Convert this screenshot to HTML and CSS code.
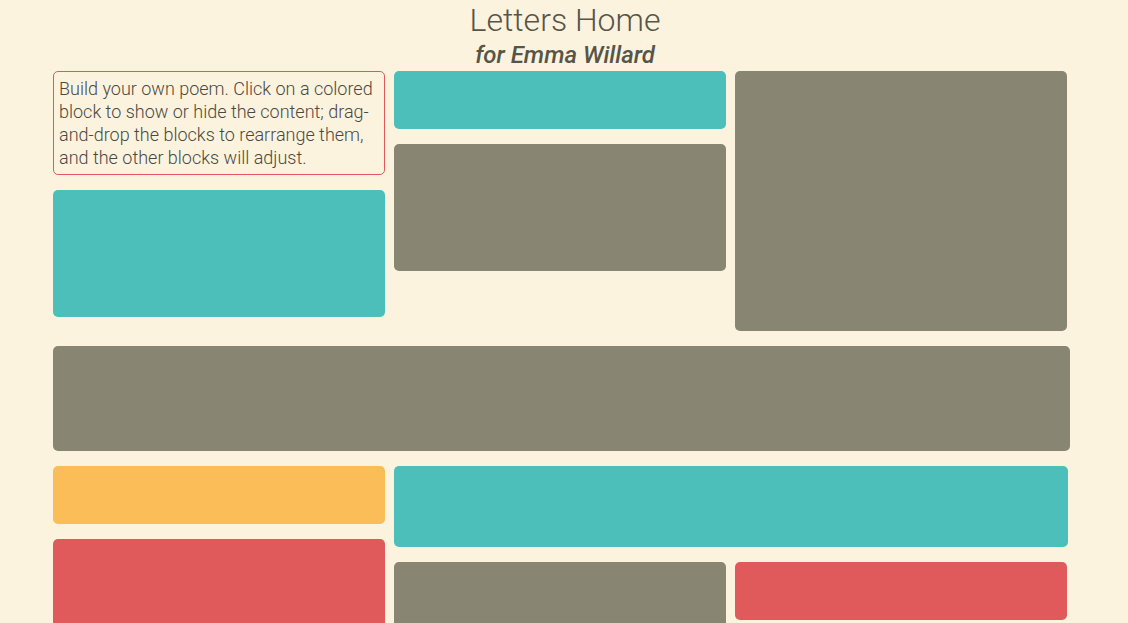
FILE: index.html
```html
<!DOCTYPE html>
<html lang="en">
<head>
<meta charset="utf-8">
<meta name="viewport" content="width=device-width, initial-scale=1">
<title>Letters Home</title>
<link rel="stylesheet" href="styles.css">
</head>
<body>
<header class="masthead">
  <h1 class="title">Letters Home</h1>
  <h2 class="subtitle">for Emma Willard</h2>
</header>
<main class="poem">
  <section class="row">
    <div class="stack">
      <p class="intro">Build your own poem. Click on a colored block to show or hide the content; drag-and-drop the blocks to rearrange them, and the other blocks will adjust.</p>
      <button type="button" class="block teal large" aria-label="Show stanza 1"></button>
    </div>
    <div class="stack">
      <button type="button" class="block teal small" aria-label="Show stanza 2"></button>
      <button type="button" class="block stone large" aria-label="Show stanza 3"></button>
    </div>
    <div class="stack">
      <button type="button" class="block stone tall" aria-label="Show stanza 4"></button>
    </div>
  </section>
  <button type="button" class="block stone wide" aria-label="Show stanza 5"></button>
  <section class="row">
    <div class="stack">
      <button type="button" class="block gold small" aria-label="Show stanza 6"></button>
      <button type="button" class="block red large" aria-label="Show stanza 7"></button>
    </div>
    <div class="stack double">
      <button type="button" class="block teal medium" aria-label="Show stanza 8"></button>
      <div class="pair">
        <button type="button" class="block stone large" aria-label="Show stanza 9"></button>
        <button type="button" class="block red small" aria-label="Show stanza 10"></button>
      </div>
    </div>
  </section>
</main>
</body>
</html>
```
FILE: styles.css
```css
* {
  box-sizing: border-box;
}

body {
  margin: 0;
  background: #fcf3df;
  color: #575547;
  font-family: Roboto, "Liberation Sans", sans-serif;
}

.masthead {
  padding-left: 2px;
  text-align: center;
}

.title,
.subtitle {
  margin: 0;
}

.title {
  font-size: 32px;
  font-weight: 300;
  line-height: 40px;
}

.subtitle {
  font-size: 24px;
  font-style: italic;
  font-weight: 500;
  line-height: 31px;
}

.poem {
  display: flex;
  flex-direction: column;
  gap: 15px;
  padding: 0 58px 15px 53px;
}

.row {
  display: grid;
  grid-template-columns: repeat(3, 1fr);
  gap: 9px;
  align-items: start;
  margin-right: 3px;
}

.stack {
  display: flex;
  flex-direction: column;
  gap: 15px;
}

.double {
  grid-column: span 2;
  margin-right: -1px;
}

.pair {
  display: grid;
  grid-template-columns: repeat(2, 1fr);
  gap: 9px;
  align-items: start;
  margin-right: 1px;
}

.intro {
  margin: 0;
  padding: 5px;
  border: 1px solid #e15a5b;
  border-radius: 5px;
  color: #4b493f;
  font-size: 18px;
  font-weight: 300;
  line-height: 23px;
}

.block {
  display: block;
  width: 100%;
  padding: 0;
  border: 0;
  border-radius: 5px;
  cursor: pointer;
}

.small { height: 58px; }
.medium { height: 81px; }
.wide { height: 105px; }
.large { height: 127px; }
.tall { height: 260px; }

.teal { background: #4dbfbb; }
.stone { background: #888573; }
.gold { background: #fabd57; }
.red { background: #e15a5b; }
```
